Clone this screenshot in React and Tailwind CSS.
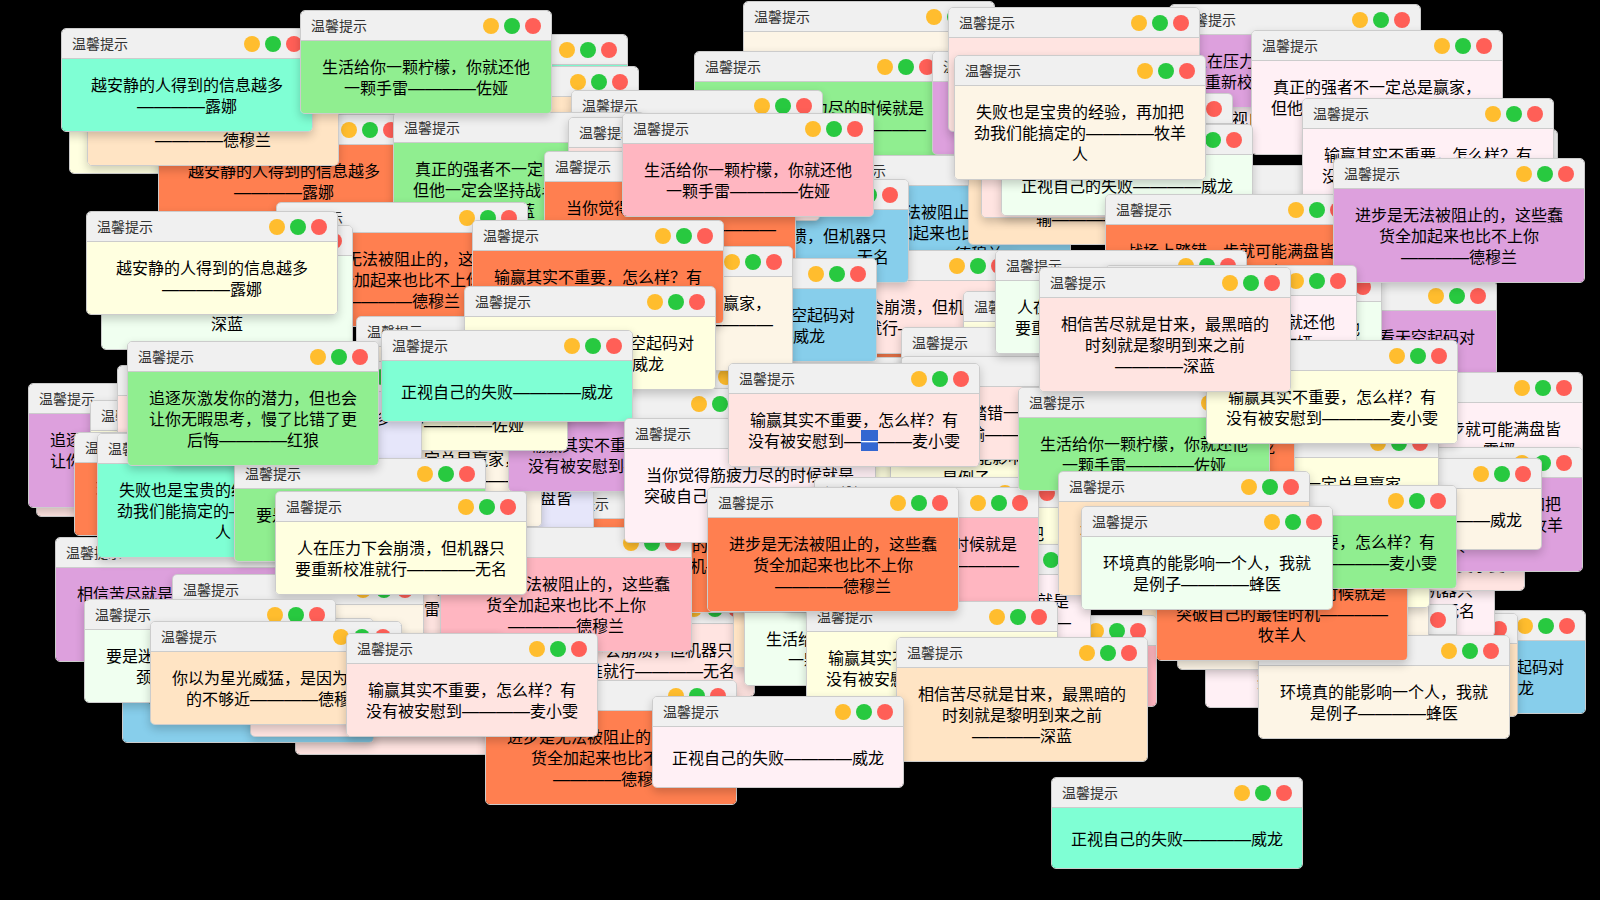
import React from "react";

// Frases: cada elemento es una línea del mensaje
const frases = {
  luna: ["越安静的人得到的信息越多", "————露娜"],
  zoya: ["生活给你一颗柠檬，你就还他", "一颗手雷————佐娅"],
  fallo: ["正视自己的失败————威龙"],
  pastor: ["失败也是宝贵的经验，再加把", "劲我们能搞定的————牧羊", "人"],
  mai: ["输赢其实不重要，怎么样？有", "没有被安慰到————麦小雯"],
  progreso: ["进步是无法被阻止的，这些蠢", "货全加起来也比不上你", "————德穆兰"],
  alba: ["相信苦尽就是甘来，最黑暗的", "时刻就是黎明到来之前", "————深蓝"],
  fuerte: ["真正的强者不一定总是赢家，", "但他一定会坚持战斗————", "深蓝"],
  presion: ["人在压力下会崩溃，但机器只", "要重新校准就行————无名"],
  lobo: ["追逐灰激发你的潜力，但也会", "让你无暇思考，慢了比错了更", "后悔————红狼"],
  cansado: ["当你觉得筋疲力尽的时候就是", "突破自己的最佳时机————", "牧羊人"],
  entorno: ["环境真的能影响一个人，我就", "是例子————蜂医"],
  estrella: ["你以为星光威猛，是因为你离", "的不够近————德穆兰"],
  batalla: ["战场上踏错一步就可能满盘皆", "输————露娜"],
  cielo: ["要是迷茫就抬头看天空起码对", "颈椎好————威龙"],
};

const fondos = {
  aqua: "bg-[#7fffd4]",
  verde: "bg-[#90ee90]",
  bisque: "bg-[#ffe4c4]",
  coral: "bg-[#ff7f50]",
  amarillo: "bg-[#ffffe0]",
  menta: "bg-[#f0fff0]",
  crema: "bg-[#fdf5e6]",
  rosa: "bg-[#ffe4e1]",
  rosado: "bg-[#ffb6c1]",
  ciruela: "bg-[#dda0dd]",
  celeste: "bg-[#87ceeb]",
  lavanda: "bg-[#fff0f5]",
  lila: "bg-[#e6e6fa]",
};

// x, y, color, frase, (opcional) guion seleccionado. De atrás hacia adelante
const ventanas = [
  [743, 1, "crema", "fallo"],
  [694, 51, "verde", "cansado"],
  [932, 51, "ciruela", "zoya"],
  [819, 155, "celeste", "progreso"],
  [1196, 57, "lavanda", "fallo"],
  [1169, 4, "ciruela", "presion"],
  [1251, 30, "lavanda", "fuerte"],
  [1120, 165, "lavanda", "zoya"],
  [968, 141, "bisque", "batalla"],
  [981, 93, "rosa", "alba"],
  [1001, 124, "menta", "fallo"],
  [948, 7, "rosa", "lobo"],
  [954, 55, "crema", "pastor"],
  [1306, 129, "crema", "luna"],
  [1302, 98, "lavanda", "mai"],
  [1105, 194, "coral", "batalla"],
  [1245, 280, "ciruela", "cielo"],
  [1130, 271, "menta", "zoya"],
  [1333, 158, "ciruela", "progreso"],
  [700, 254, "coral", "zoya"],
  [766, 250, "rosa", "presion"],
  [657, 179, "celeste", "presion"],
  [376, 34, "aqua", "luna"],
  [387, 66, "bisque", "mai"],
  [69, 70, "amarillo", "zoya"],
  [158, 114, "coral", "luna"],
  [87, 41, "bisque", "progreso"],
  [61, 28, "aqua", "luna"],
  [571, 90, "amarillo", "mai"],
  [393, 112, "verde", "fuerte"],
  [300, 10, "verde", "zoya"],
  [568, 117, "rosa", "mai"],
  [544, 151, "coral", "cansado"],
  [622, 113, "rosado", "zoya"],
  [276, 202, "coral", "progreso"],
  [101, 225, "menta", "fuerte"],
  [86, 211, "amarillo", "luna"],
  [660, 357, "crema", "mai"],
  [719, 366, "rosa", "mai"],
  [535, 361, "lila", "zoya"],
  [625, 258, "celeste", "cielo"],
  [541, 246, "crema", "fuerte"],
  [472, 220, "coral", "mai"],
  [963, 291, "amarillo", "zoya"],
  [901, 327, "menta", "luna"],
  [628, 400, "celeste", "mai"],
  [860, 385, "amarillo", "zoya"],
  [890, 400, "amarillo", "entorno"],
  [901, 356, "rosa", "batalla"],
  [995, 250, "menta", "presion"],
  [1105, 265, "lavanda", "zoya"],
  [36, 413, "rosa", "mai"],
  [28, 383, "ciruela", "lobo"],
  [90, 400, "amarillo", "luna"],
  [117, 365, "rosa", "mai"],
  [74, 432, "coral", "entorno"],
  [55, 537, "ciruela", "alba"],
  [97, 433, "aqua", "pastor"],
  [503, 593, "rosa", "presion"],
  [733, 564, "bisque", "mai"],
  [542, 488, "coral", "cansado"],
  [342, 441, "lila", "batalla"],
  [290, 402, "crema", "fuerte"],
  [508, 388, "ciruela", "mai"],
  [316, 347, "amarillo", "zoya"],
  [356, 316, "crema", "mai"],
  [170, 361, "lila", "luna"],
  [464, 286, "amarillo", "cielo"],
  [381, 330, "aqua", "fallo"],
  [234, 458, "verde", "cielo"],
  [127, 341, "verde", "lobo"],
  [332, 531, "rosa", "zoya"],
  [172, 574, "crema", "mai"],
  [440, 527, "rosado", "progreso"],
  [275, 491, "amarillo", "presion"],
  [295, 663, "rosa", "fallo"],
  [122, 618, "celeste", "pastor"],
  [250, 633, "rosa", "mai"],
  [84, 599, "menta", "cielo"],
  [150, 621, "bisque", "estrella"],
  [485, 680, "coral", "progreso"],
  [346, 633, "rosa", "mai"],
  [624, 418, "lavanda", "cansado"],
  [728, 363, "rosa", "mai", 1],
  [814, 477, "amarillo", "pastor"],
  [1142, 540, "bisque", "mai"],
  [905, 615, "rosado", "fallo"],
  [839, 544, "lavanda", "cansado"],
  [744, 582, "menta", "zoya"],
  [787, 487, "rosado", "cansado"],
  [806, 601, "amarillo", "mai"],
  [707, 487, "coral", "progreso"],
  [896, 637, "bisque", "alba"],
  [652, 696, "lavanda", "fallo"],
  [1334, 610, "celeste", "cielo"],
  [1266, 613, "bisque", "mai"],
  [1243, 533, "lavanda", "presion"],
  [1273, 487, "rosa", "mai"],
  [1331, 372, "lavanda", "batalla"],
  [1331, 447, "ciruela", "pastor"],
  [1205, 604, "lavanda", "cielo"],
  [1177, 545, "crema", "alba"],
  [1178, 504, "amarillo", "zoya"],
  [1290, 458, "crema", "fallo"],
  [1187, 427, "amarillo", "fuerte"],
  [1043, 385, "coral", "fallo"],
  [1018, 387, "verde", "zoya"],
  [1206, 340, "amarillo", "mai"],
  [1039, 267, "rosa", "alba"],
  [1258, 635, "crema", "entorno"],
  [1156, 536, "coral", "cansado"],
  [1205, 485, "verde", "mai"],
  [1058, 471, "bisque", "progreso"],
  [1081, 506, "menta", "entorno"],
  [1051, 777, "aqua", "fallo"],
];

function Guiones({ marcado }) {
  return (
    <span className="font-['Liberation_Sans',sans-serif] text-[17px] leading-none">
      {marcado === undefined ? (
        "————"
      ) : (
        <>
          {"—".repeat(marcado)}
          <span className="inline-block h-[21px] bg-[#3367d1] align-top leading-[21px] text-white">—</span>
          {"—".repeat(3 - marcado)}
        </>
      )}
    </span>
  );
}

function Linea({ texto, marcado }) {
  const [antes, despues] = texto.split("————");
  if (despues === undefined) {
    return <span className="block h-[21px]">{texto}</span>;
  }
  return (
    <span className="block h-[21px]">
      {antes}
      <Guiones marcado={marcado} />
      {despues}
    </span>
  );
}

function Ventana({ x, y, color, frase, marcado }) {
  return (
    <section
      className="absolute w-[252px] overflow-hidden rounded-[5px] border border-[#cccccc] shadow-[0_4px_10px_rgba(0,0,0,0.2)]"
      style={{ left: x, top: y }}
    >
      <header className="flex h-[30px] items-center justify-between border-b border-[#cccccc] bg-[#f0f0f0] px-[10px]">
        <h2 className="pb-[2px] text-[14px] leading-[20px] text-[#333333]">温馨提示</h2>
        <div className="flex gap-[5px]">
          <button aria-label="最小化" className="size-4 rounded-full bg-[#ffbd2e]" />
          <button aria-label="最大化" className="size-4 rounded-full bg-[#28c940]" />
          <button aria-label="关闭" className="size-4 rounded-full bg-[#ff5f57]" />
        </div>
      </header>
      <div className={`flex min-h-[60px] items-center justify-center py-[15px] ${fondos[color]}`}>
        <p className="text-center text-[16px] leading-[21px] whitespace-nowrap text-black">
          {frases[frase].map((texto, idx) => (
            <Linea key={idx} texto={texto} marcado={marcado} />
          ))}
        </p>
      </div>
    </section>
  );
}

export default function App() {
  return (
    <main className="relative min-h-screen overflow-hidden bg-black font-['Noto_Sans_CJK_SC',sans-serif]">
      {ventanas.map(([x, y, color, frase, marcado], idx) => (
        <Ventana key={idx} x={x} y={y} color={color} frase={frase} marcado={marcado} />
      ))}
    </main>
  );
}
